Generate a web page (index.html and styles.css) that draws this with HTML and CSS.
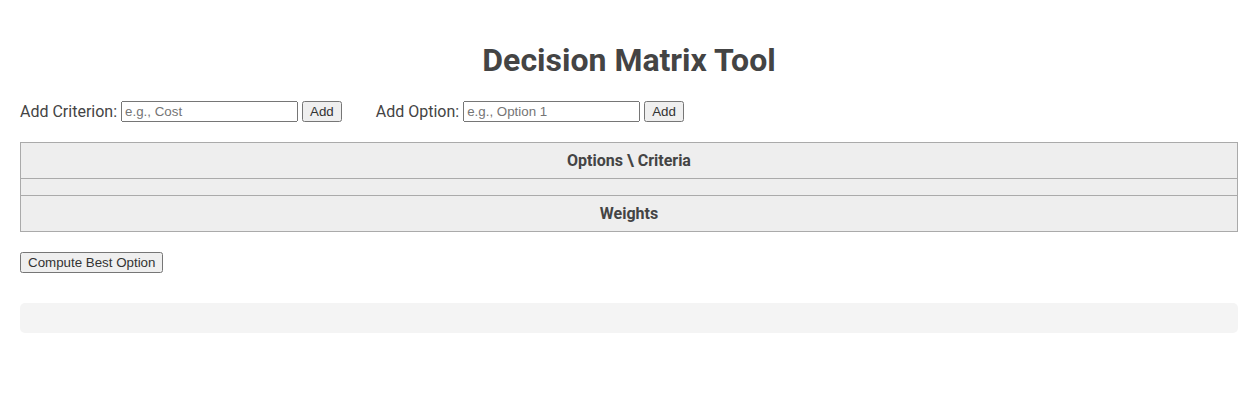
FILE: index.html
```html
<!DOCTYPE html>
<html>
  <head>
    <link rel="stylesheet" href="styles.css">
  </head>
  <body>
    <h1>Decision Matrix Tool</h1>

    <div class="controls">
      <div class="control-group">
        <label for="criterion">Add Criterion:</label>
        <input type="text" id="criterion" placeholder="e.g., Cost" />
        <button>Add</button>
      </div>
      <div class="control-group">
        <label for="option">Add Option:</label>
        <input type="text" id="option" placeholder="e.g., Option 1" />
        <button>Add</button>
      </div>
    </div>

    <table class="matrix">
      <thead>
        <tr><th>Options \ Criteria</th></tr>
      </thead>
      <tbody>
        <tr><td></td></tr>
      </tbody>
      <tfoot>
        <tr><th>Weights</th></tr>
      </tfoot>
    </table>

    <button class="compute">Compute Best Option</button>

    <div class="result"></div>
  </body>
</html>
```

FILE: styles.css
```css
body {
  font-family: Roboto, "Liberation Sans", sans-serif;
  font-size: 16px;
  margin: 0;
  padding: 20px 10px 20px 20px;
  color: #444;
}
h1 {
  text-align: center;
  font-size: 32px;
  margin: 21px 0 22px;
}
.controls {
  display: flex;
  align-items: center;
  gap: 34px;
}
.control-group {
  display: flex;
  align-items: center;
  gap: 4px;
}
input[type="text"] {
  width: 169px;
  font-family: "Liberation Sans", Arial, sans-serif;
  font-size: 13.33px;
}
button {
  font-family: "Liberation Sans", Arial, sans-serif;
  font-size: 13.33px;
  color: #333;
}
.matrix {
  width: 100%;
  border-collapse: collapse;
  margin-top: 20px;
}
.matrix th,
.matrix td {
  border: 1px solid #aaa;
  background-color: #eee;
  padding: 8px;
  text-align: center;
}
.compute {
  margin-top: 20px;
}
.result {
  margin-top: 30px;
  padding: 15px;
  background-color: #f4f4f4;
  border-radius: 5px;
}
```
